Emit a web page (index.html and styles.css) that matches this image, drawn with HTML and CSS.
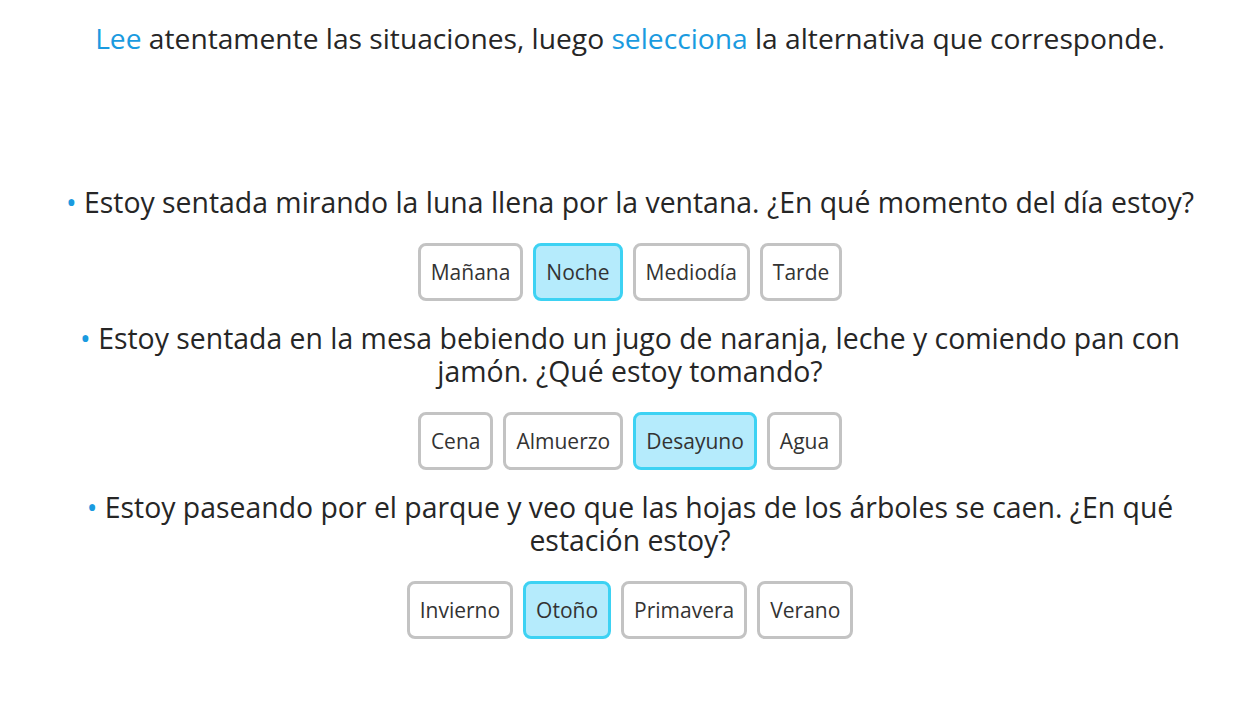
FILE: index.html
```html
<!DOCTYPE html>
<html lang="es">
<head>
<meta charset="utf-8">
<link rel="stylesheet" href="styles.css">
</head>
<body>
<div class="page">
  <h1 class="title"><span class="hl">Lee</span> atentamente las situaciones, luego <span class="hl">selecciona</span> la alternativa que corresponde.</h1>
  <div class="quiz">
    <p class="question"><span class="dot">•</span> Estoy sentada mirando la luna llena por la ventana. ¿En qué momento del día estoy?</p>
    <div class="options">
      <button class="opt">Mañana</button>
      <button class="opt selected">Noche</button>
      <button class="opt">Mediodía</button>
      <button class="opt">Tarde</button>
    </div>
    <p class="question"><span class="dot">•</span> Estoy sentada en la mesa bebiendo un jugo de naranja, leche y comiendo pan con jamón. ¿Qué estoy tomando?</p>
    <div class="options">
      <button class="opt">Cena</button>
      <button class="opt">Almuerzo</button>
      <button class="opt selected">Desayuno</button>
      <button class="opt">Agua</button>
    </div>
    <p class="question"><span class="dot">•</span> Estoy paseando por el parque y veo que las hojas de los árboles se caen. ¿En qué estación estoy?</p>
    <div class="options">
      <button class="opt">Invierno</button>
      <button class="opt selected">Otoño</button>
      <button class="opt">Primavera</button>
      <button class="opt">Verano</button>
    </div>
  </div>
</div>
</body>
</html>
```

FILE: styles.css
```css
html, body {
  margin: 0;
  padding: 0;
  background: #ffffff;
}
body {
  font-family: "Open Sans", "Noto Sans", sans-serif;
  color: #262626;
}
.page {
  width: 1246px;
  box-sizing: border-box;
  padding: 20px 0 0 14px;
  display: flex;
  flex-direction: column;
  align-items: center;
}
.title {
  margin: 0;
  font-size: 28.2px;
  font-weight: 400;
  line-height: 36px;
  text-align: center;
  white-space: nowrap;
}
.hl {
  color: #1a9be0;
}
.quiz {
  margin-top: 130px;
  width: 1150px;
  display: flex;
  flex-direction: column;
  align-items: center;
}
.question {
  margin: 0 0 24px;
  font-size: 28.4px;
  line-height: 33px;
  text-align: center;
}
.dot {
  color: #1a9be0;
}
.options {
  display: flex;
  gap: 10px;
  justify-content: center;
  margin-bottom: 21px;
}
.opt {
  font-family: inherit;
  font-size: 21px;
  color: #333;
  background: #fff;
  border: 3px solid #c3c3c3;
  border-radius: 8px;
  height: 58px;
  padding: 0 10px;
}
.opt.selected {
  background: #b5ebfc;
  border-color: #3dd2f3;
}
```
